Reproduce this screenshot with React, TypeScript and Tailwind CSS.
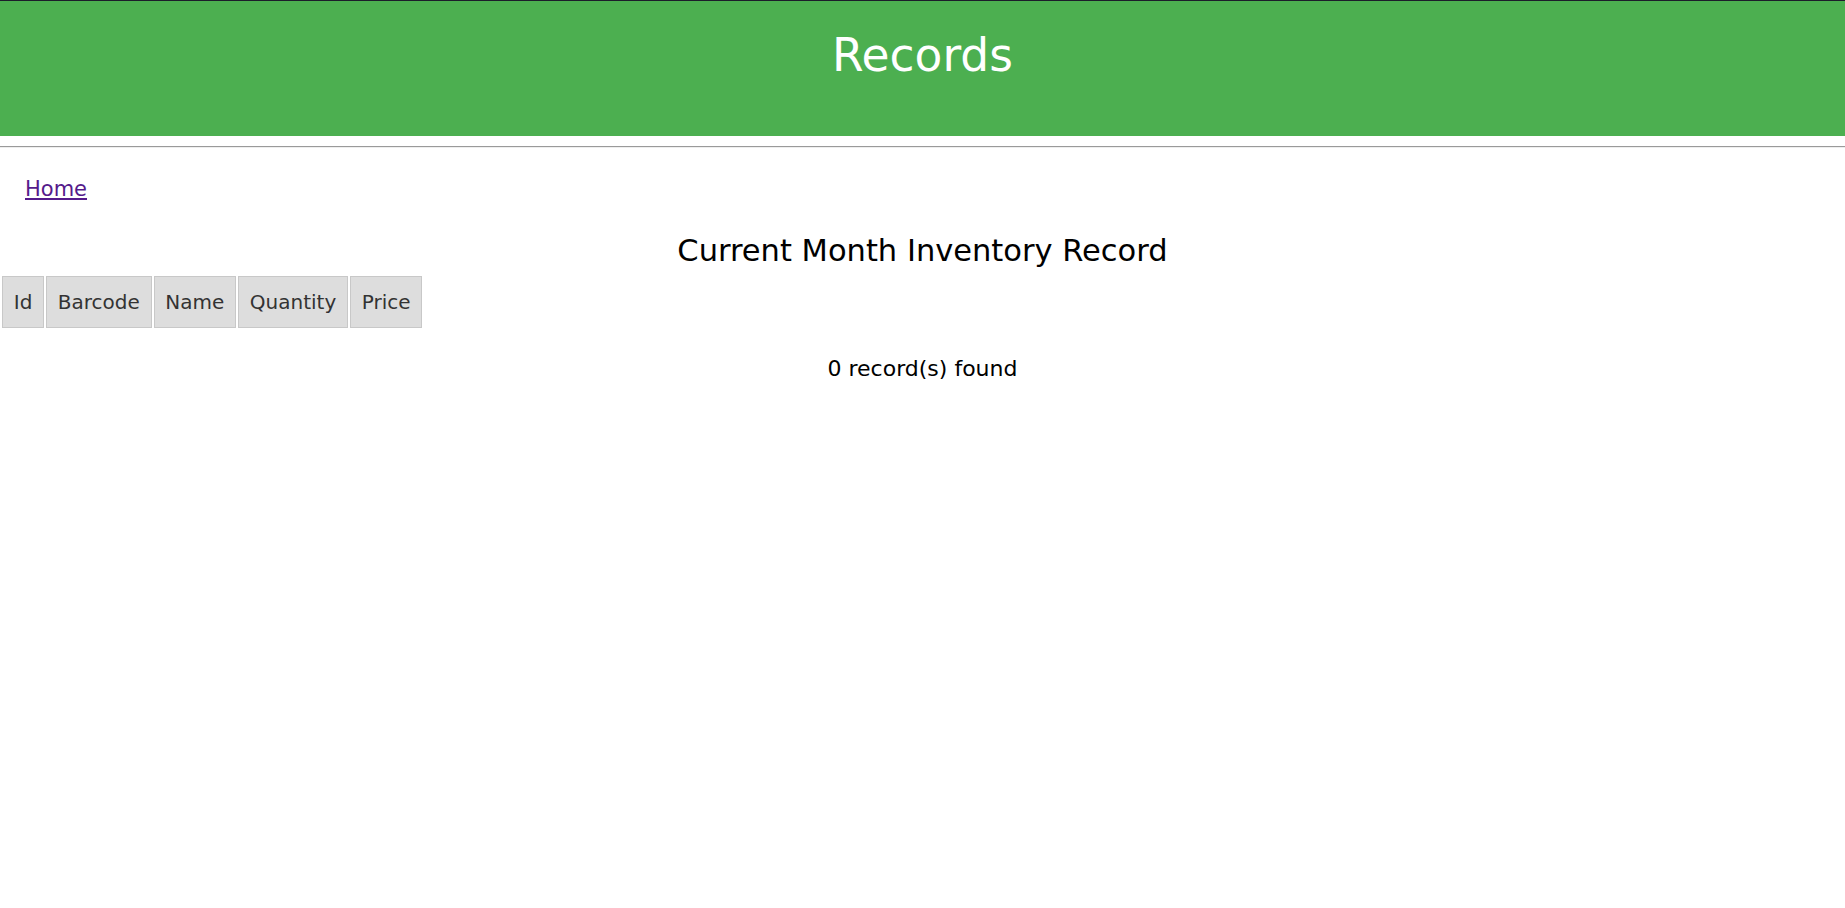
import React from "react";

export default function App() {
  const cols = ["Id", "Barcode", "Name", "Quantity", "Price"];
  return (
    <div
      className="min-h-[908px] bg-white border-t border-[#1c1c2a]"
      style={{ fontFamily: '"DejaVu Sans", sans-serif' }}
    >
      <header className="h-[135px] bg-[#4caf50] pt-[32px]">
        <h1 className="text-center text-[45.5px] leading-[45px] text-white">Records</h1>
      </header>
      <div className="mt-[10px] border-t border-[#9a9a9a] border-b border-b-[#eeeeee]" />
      <div className="mt-[31px] pl-[25px] text-[21px] leading-[21px]">
        <a href="#" className="text-[#551a8b] underline">
          Home
        </a>
      </div>
      <h2 className="mt-[36px] text-center text-[30.5px] leading-[30px] text-black">
        Current Month Inventory Record
      </h2>
      <table className="mt-[8px] border-separate border-spacing-[2px]">
        <thead>
          <tr>
            {cols.map((c) => (
              <th
                key={c}
                className="border border-[#c8c8c8] bg-[#dddddd] px-[10.75px] py-[13px] text-[20px] leading-[24px] font-normal text-[#333333]"
              >
                {c}
              </th>
            ))}
          </tr>
        </thead>
        <tbody />
      </table>
      <p className="mt-[28px] text-center text-[22px] leading-[22px] text-black">0 record(s) found</p>
    </div>
  );
}
